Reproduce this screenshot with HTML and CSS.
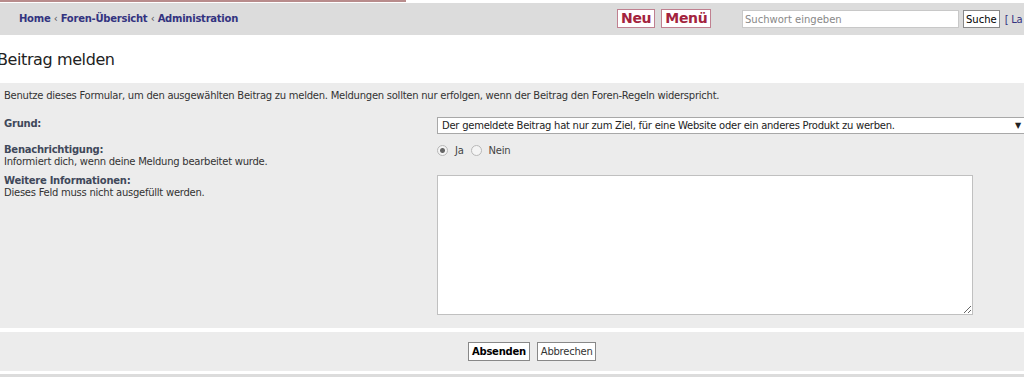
FILE: index.html
```html
<!DOCTYPE html>
<html lang="de">
<head>
    <meta charset="UTF-8">
    <title>Beitrag melden</title>
    <link rel="stylesheet" href="styles.css">
</head>
<body>
    <div class="topline"></div>
    <header class="navbar">
        <div class="crumbs">
            <a href="#">Home</a> <span class="sep">&lsaquo;</span>
            <a href="#">Foren-Übersicht</a> <span class="sep">&lsaquo;</span>
            <a href="#">Administration</a>
        </div>
        <div class="navbuttons">
            <a href="#" class="navbtn">Neu</a>
            <a href="#" class="navbtn">Menü</a>
        </div>
        <form class="search">
            <input type="text" class="search-input" placeholder="Suchwort eingeben">
            <button type="button" class="search-btn">Suche</button>
            <span class="login">[ La</span>
        </form>
    </header>

    <h2 class="title">Beitrag melden</h2>

    <div class="panel">
        <p class="intro">Benutze dieses Formular, um den ausgewählten Beitrag zu melden. Meldungen sollten nur erfolgen, wenn der Beitrag den Foren-Regeln widerspricht.</p>
        <div class="row row-grund">
            <div class="label"><b>Grund:</b></div>
            <div class="field">
                <div class="select">
                    <span>Der gemeldete Beitrag hat nur zum Ziel, für eine Website oder ein anderes Produkt zu werben.</span>
                    <span class="arrow">&#9660;</span>
                </div>
            </div>
        </div>
        <div class="row">
            <div class="label"><b>Benachrichtigung:</b><br>Informiert dich, wenn deine Meldung bearbeitet wurde.</div>
            <div class="field radios">
                <span class="radio checked"></span> <span>Ja</span>
                <span class="radio"></span> <span>Nein</span>
            </div>
        </div>
        <div class="row row-info">
            <div class="label"><b>Weitere Informationen:</b><br>Dieses Feld muss nicht ausgefüllt werden.</div>
            <div class="field">
                <textarea class="message"></textarea>
            </div>
        </div>
    </div>

    <div class="panel actions">
        <button type="button" class="btn primary">Absenden</button>
        <button type="button" class="btn">Abbrechen</button>
    </div>
    <div class="bottomline"></div>
</body>
</html>
```

FILE: styles.css
```css
body {
    margin: 0;
    padding: 0;
    background-color: #fff;
    font-family: "DejaVu Sans", Verdana, sans-serif;
    font-size: 10px;
    letter-spacing: -0.25px;
    color: #333;
    overflow: hidden;
}
a {
    text-decoration: none;
}
.topline {
    width: 406px;
    height: 2px;
    background-color: #b88c8c;
    margin-bottom: 1px;
}
.navbar {
    display: flex;
    align-items: center;
    height: 32px;
    background-color: #dcdcdc;
}
.crumbs {
    width: 598px;
    padding-left: 19px;
    margin-top: -1px;
    font-weight: bold;
    font-size: 10px;
    color: #333380;
}
.crumbs a {
    color: #333380;
}
.crumbs .sep {
    font-weight: normal;
    color: #555;
}
.navbuttons {
    display: flex;
    gap: 6px;
    width: 125px;
    margin-top: -1px;
}
.navbtn {
    display: block;
    background-color: #fff;
    border: 1px solid #c08090;
    color: #a3243e;
    font-weight: bold;
    font-size: 14px;
    letter-spacing: -0.3px;
    line-height: 17px;
    padding: 0 3px;
}
.search {
    display: flex;
    align-items: center;
    margin: 0;
}
.search-input {
    width: 211px;
    height: 14px;
    padding: 1px 2px;
    border: 1px solid #c8c8c8;
    font-family: inherit;
    font-size: 10px;
    color: #333;
}
.search-input::placeholder {
    color: #888;
}
.search-btn {
    margin-left: 4px;
    height: 18px;
    padding: 0 2px;
    background-color: #fff;
    border: 1px solid #888;
    font-family: inherit;
    font-size: 10px;
    color: #000;
}
.login {
    margin-left: 5px;
    color: #333380;
    font-size: 10px;
    white-space: nowrap;
}
.title {
    margin: 0;
    height: 48px;
    line-height: 50px;
    margin-left: -3px;
    font-size: 16px;
    letter-spacing: -0.4px;
    font-weight: normal;
    color: #222;
}
.panel {
    background-color: #ececec;
    padding: 6px 0 5px 4px;
}
.intro {
    margin: 0 0 14px;
    line-height: 14px;
}
.row {
    display: flex;
    margin-bottom: 8px;
}
.row-grund {
    margin-bottom: 10px;
}
.row-grund .label {
    padding-top: 1px;
}
.row-info {
    margin-top: -1px;
}
.label {
    width: 433px;
    line-height: 12px;
    color: #333;
}
.label b {
    color: #40485a;
}
.field {
    flex: 1;
}
.select {
    display: flex;
    justify-content: space-between;
    align-items: center;
    height: 15px;
    margin-right: -6px;
    padding: 0 8px 0 4px;
    background-color: #fff;
    border: 1px solid #a8a8a8;
    color: #222;
}
.select .arrow {
    font-size: 8px;
    color: #222;
}
.radios {
    display: flex;
    align-items: center;
    gap: 7px;
    height: 12px;
    color: #444;
}
.radio {
    display: inline-block;
    box-sizing: border-box;
    width: 11px;
    height: 11px;
    border: 1px solid #b8b8b8;
    border-radius: 50%;
    background-color: #f4f4f4;
}
.radio.checked {
    background: radial-gradient(circle, #666 0, #666 2px, #f4f4f4 3px);
}
.message {
    display: block;
    width: 536px;
    height: 140px;
    box-sizing: border-box;
    margin: 0;
    border: 1px solid #c0c0c0;
    background-color: #fff;
}
.actions {
    margin-top: 4px;
    padding: 10px 0 10px 468px;
    display: flex;
    gap: 7px;
}
.btn {
    height: 19px;
    padding: 0 3px;
    background-color: #fff;
    border: 1px solid #888;
    font-family: inherit;
    font-size: 10px;
    letter-spacing: -0.25px;
    color: #333;
}
.btn.primary {
    font-weight: bold;
    color: #000;
}
.bottomline {
    margin-top: 3px;
    height: 4px;
    background-color: #dcdcdc;
}
```
